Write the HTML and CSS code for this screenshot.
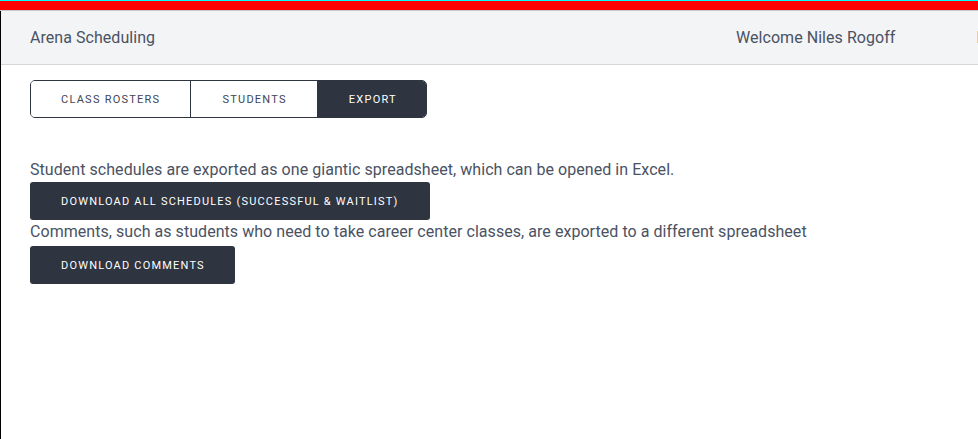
FILE: index.html
```html
<!DOCTYPE html>
<html>
<head>
<meta charset="utf-8">
<link rel="stylesheet" href="styles.css">
</head>
<body>
<div class="topbar"></div>
<div class="page">
  <header class="header">
    <div class="brand">Arena Scheduling</div>
    <div class="right">
      <span class="welcome">Welcome Niles Rogoff</span>
      <span class="logout">Logout</span>
    </div>
  </header>
  <main class="content">
    <div class="tabs">
      <div class="tab">Class Rosters</div>
      <div class="tab">Students</div>
      <div class="tab active">Export</div>
    </div>
    <p class="text first">Student schedules are exported as one giantic spreadsheet, which can be opened in Excel.</p>
    <button class="btn">Download all schedules (successful &amp; waitlist)</button>
    <p class="text">Comments, such as students who need to take career center classes, are exported to a different spreadsheet</p>
    <button class="btn last">Download comments</button>
  </main>
</div>
</body>
</html>
```
FILE: styles.css
```css
html, body {
  margin: 0;
  padding: 0;
  background: #fff;
  overflow: hidden;
}
body {
  font-family: Roboto, "Liberation Sans", sans-serif;
  color: #4a5060;
}
.topbar {
  height: 9px;
  background: #ff0000;
  border-top: 1px solid #00ffff;
  border-bottom: 1px solid #c8c8c8;
}
.page {
  border-left: 1px solid #000;
  height: 428px;
  overflow: hidden;
}
.header {
  height: 53px;
  background: #f3f4f6;
  border-bottom: 1px solid #d6d7d9;
  display: flex;
  align-items: center;
  padding-left: 29px;
  font-size: 16px;
  letter-spacing: 0.05px;
  color: #4a5263;
  white-space: nowrap;
}
.brand {
  flex: 1;
}
.right {
  flex: none;
  width: 242px;
  display: flex;
  gap: 81px;
  overflow: hidden;
}
.logout {
  color: #6b5a3a;
}
.content {
  padding: 15px 29px;
}
.tabs {
  display: inline-flex;
  border: 1px solid #2e3440;
  border-radius: 5px;
  overflow: hidden;
  height: 36px;
}
.tab {
  display: flex;
  align-items: center;
  padding: 0 30px 0 30px;
  font-size: 11px;
  letter-spacing: 1.25px;
  text-transform: uppercase;
  color: #3e4657;
  background: #fff;
}
.tab + .tab {
  border-left: 1px solid #2e3440;
  padding-left: 31px;
}
.tab.active {
  background: #2e3440;
  color: #fff;
  padding-right: 29px;
}
.text {
  margin: 0;
  font-size: 16px;
  letter-spacing: 0.05px;
  line-height: 24px;
  color: #4a5263;
}
.text.first {
  margin-top: 40px;
}
.btn {
  display: block;
  height: 38px;
  border: none;
  border-radius: 3px;
  background: #2e3440;
  color: #fff;
  font-family: Roboto, "Liberation Sans", sans-serif;
  font-size: 11px;
  letter-spacing: 1.2px;
  text-transform: uppercase;
  padding: 0 31px 0 31px;
  margin: 0;
}
.btn.last {
  margin-top: 2px;
  padding-right: 30px;
}
```
